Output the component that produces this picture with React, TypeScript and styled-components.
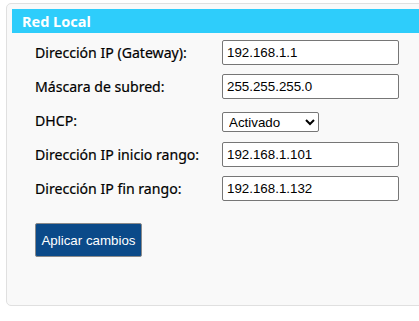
import React from "react";
import styled, { createGlobalStyle } from "styled-components";

const Global = createGlobalStyle`
  html, body { margin: 0; padding: 0; background: #ffffff; overflow: hidden; }
  #root { width: 419px; height: 321px; overflow: hidden; }
`;

const Panel = styled.section`
  box-sizing: border-box;
  margin: 3px 0 0 6px;
  width: 440px;
  height: 303px;
  border: 1px solid #e0e0e0;
  border-radius: 5px;
  background: #f9f9f9;
  padding: 5px;
`;

const Header = styled.h2`
  margin: 0;
  height: 24px;
  line-height: 24px;
  padding-left: 10px;
  background: #2ecdfb;
  color: #ffffff;
  font-family: "Noto Sans", sans-serif;
  font-size: 14.5px;
  font-weight: 700;
`;

const Form = styled.form`
  display: flex;
  flex-direction: column;
  padding: 7px 0 0 23px;
`;

const Grid = styled.div`
  display: grid;
  grid-template-columns: 187px 177px;
  grid-auto-rows: 25px;
  row-gap: 9px;
`;

const Label = styled.label`
  display: flex;
  align-items: center;
  font-family: "Noto Sans", sans-serif;
  font-size: 14.1px;
  font-weight: 400;
  color: #000000;
  -webkit-text-stroke: 0.2px #000000;
`;

const TextInput = styled.input`
  box-sizing: border-box;
  width: 177px;
  height: 25px;
  margin: 0;
  padding: 0 4px;
  border: 1px solid #767676;
  border-radius: 2px;
  background: #ffffff;
  font-family: "Liberation Sans", Arial, sans-serif;
  font-size: 13.333px;
  color: #000000;
`;

const Select = styled.select`
  box-sizing: border-box;
  align-self: start;
  margin: 4px 0 0 0;
  width: 97px;
  height: 20px;
  padding: 0 2px;
  border: 1px solid #767676;
  border-radius: 2px;
  background: #ffffff;
  font-family: "Liberation Sans", Arial, sans-serif;
  font-size: 13.333px;
  color: #000000;
`;

const Button = styled.button`
  align-self: flex-start;
  box-sizing: border-box;
  margin-top: 22px;
  width: 107px;
  height: 34px;
  padding: 0;
  border: 1px solid #8a8a8a;
  border-radius: 2px;
  background: #0b4a89;
  color: #ffffff;
  font-family: "Liberation Sans", Arial, sans-serif;
  font-size: 13.333px;
  cursor: pointer;
`;

const fields = [
  { id: "gw", label: "Dirección IP (Gateway):", value: "192.168.1.1" },
  { id: "mask", label: "Máscara de subred:", value: "255.255.255.0" },
];
const fields2 = [
  { id: "start", label: "Dirección IP inicio rango:", value: "192.168.1.101" },
  { id: "end", label: "Dirección IP fin rango:", value: "192.168.1.132" },
];

export default function App() {
  return (
    <>
      <Global />
      <Panel>
        <Header>Red Local</Header>
        <Form onSubmit={(e) => e.preventDefault()}>
          <Grid>
            {fields.map((f) => (
              <React.Fragment key={f.id}>
                <Label htmlFor={f.id}>{f.label}</Label>
                <TextInput id={f.id} defaultValue={f.value} />
              </React.Fragment>
            ))}
            <Label htmlFor="dhcp">DHCP:</Label>
            <Select id="dhcp" defaultValue="on">
              <option value="on">Activado</option>
              <option value="off">Desactivado</option>
            </Select>
            {fields2.map((f) => (
              <React.Fragment key={f.id}>
                <Label htmlFor={f.id}>{f.label}</Label>
                <TextInput id={f.id} defaultValue={f.value} />
              </React.Fragment>
            ))}
          </Grid>
          <Button type="submit">Aplicar cambios</Button>
        </Form>
      </Panel>
    </>
  );
}
